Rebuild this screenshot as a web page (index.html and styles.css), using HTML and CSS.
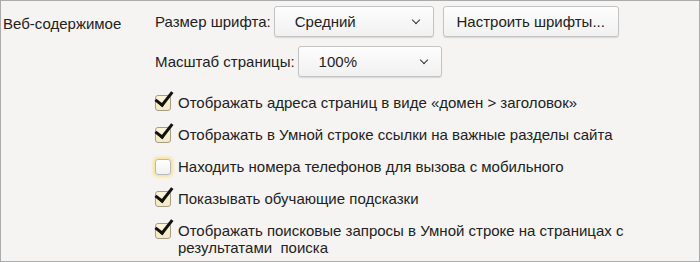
FILE: index.html
```html
<!DOCTYPE html>
<html lang="ru">
<head>
  <meta charset="UTF-8">
  <title>Веб-содержимое</title>
  <link rel="stylesheet" href="styles.css">
</head>
<body>
  <div class="panel">
    <div class="section-title">Веб-содержимое</div>
    <div class="section-body">
      <div class="field">
        <span class="field-label">Размер шрифта:</span>
        <div class="select select-size"><span>Средний</span><i class="chevron"></i></div>
        <button class="btn">Настроить шрифты...</button>
      </div>
      <div class="field">
        <span class="field-label">Масштаб страницы:</span>
        <div class="select select-zoom"><span>100%</span><i class="chevron"></i></div>
      </div>

      <ul class="options">
        <li class="option checked"><span class="box"></span><span class="option-text">Отображать адреса страниц в виде «домен &gt; заголовок»</span></li>
        <li class="option checked"><span class="box"></span><span class="option-text">Отображать в Умной строке ссылки на важные разделы сайта</span></li>
        <li class="option focused"><span class="box"></span><span class="option-text">Находить номера телефонов для вызова с мобильного</span></li>
        <li class="option checked"><span class="box"></span><span class="option-text">Показывать обучающие подсказки</span></li>
        <li class="option checked"><span class="box"></span><span class="option-text">Отображать поисковые запросы в Умной строке на страницах с результатами&nbsp; поиска</span></li>
      </ul>
    </div>
  </div>
</body>
</html>
```

FILE: styles.css
```css
html, body {
  margin: 0;
  height: 100%;
}
body {
  font-family: "Liberation Sans", Arial, sans-serif;
  font-size: 15px;
  color: #222;
  background: #f5f4f2;
}
.panel {
  box-sizing: border-box;
  height: 262px;
  border: 1px solid #ababab;
  display: flex;
  overflow: hidden;
}
.section-title {
  width: 152px;
  padding: 14px 0 0 2px;
}
.section-body {
  flex: 1;
  padding-top: 5px;
}
.field {
  display: flex;
  align-items: center;
  height: 31px;
  margin-bottom: 9px;
}
.field-label {
  margin-right: 3px;
}
.select, .btn {
  box-sizing: border-box;
  height: 31px;
  border: 1px solid #c4c4c4;
  border-radius: 3px;
  background: linear-gradient(#fdfdfd, #f1f1f1);
  box-shadow: 0 1px 1px rgba(0, 0, 0, 0.12);
  font: inherit;
  color: #222;
}
.select {
  display: flex;
  align-items: center;
  padding: 0 14px 0 20px;
}
.select span {
  flex: 1;
}
.select-size {
  width: 160px;
}
.select-zoom {
  width: 144px;
}
.chevron {
  width: 5px;
  height: 5px;
  border-right: 1.5px solid #333;
  border-bottom: 1.5px solid #333;
  transform: rotate(45deg);
  margin-top: -4px;
}
.btn {
  margin-left: 9px;
  padding: 0 10px;
  width: 176px;
  text-align: center;
}
.options {
  list-style: none;
  margin: 17px 0 0;
  padding: 0;
}
.option {
  display: flex;
  align-items: flex-start;
  margin-bottom: 15px;
  line-height: 17px;
}
.box {
  position: relative;
  flex: none;
  box-sizing: border-box;
  width: 16px;
  height: 16px;
  margin: 1px 7px 0 0;
  border: 1px solid #a79d86;
  border-radius: 3px;
  background: linear-gradient(#fbf5dc, #f3e9c0);
}
.option.checked .box::after {
  content: "";
  position: absolute;
  left: 3px;
  top: -8px;
  width: 7px;
  height: 15px;
  border-right: 3px solid #111;
  border-bottom: 3px solid #111;
  transform: rotate(38deg);
}
.option.focused .box {
  background: linear-gradient(#ffffff, #f0f0f0);
  border-color: #b9b9b9;
  box-shadow: 0 0 3px 2px rgba(250, 214, 80, 0.55);
}
.option-text {
  max-width: 470px;
}
```
